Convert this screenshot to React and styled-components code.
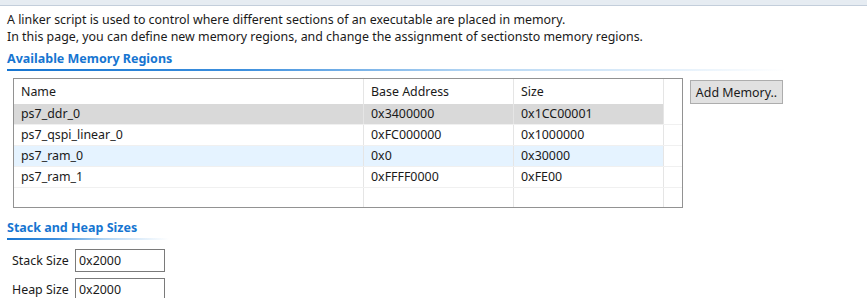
import React from 'react';
import styled, { createGlobalStyle } from 'styled-components';

const GlobalStyle = createGlobalStyle`
	body {
		margin: 0;
		background: #ffffff;
		font-family: "Noto Sans", "Open Sans", sans-serif;
		font-size: 12.4px;
		color: #1a1a1a;
	}
`;

const regions = [
	{ name: 'ps7_ddr_0', base: '0x3400000', size: '0x1CC00001', state: 'selected' },
	{ name: 'ps7_qspi_linear_0', base: '0xFC000000', size: '0x1000000' },
	{ name: 'ps7_ram_0', base: '0x0', size: '0x30000', state: 'hover' },
	{ name: 'ps7_ram_1', base: '0xFFFF0000', size: '0xFE00' },
	{ name: '', base: '', size: '' },
];

const COLS = '350px 150px 150px 18px';

export const App = () => (
	<Page>
		<GlobalStyle />
		<TopBand />
		<Content>
			<Intro>
				A linker script is used to control where different sections of an executable are placed in memory.
				<br />
				In this page, you can define new memory regions, and change the assignment of sectionsto memory regions.
			</Intro>

			<SectionTitle $lineWidth={780}>Available Memory Regions</SectionTitle>

			<TableRow>
				<Table>
					<HeaderRow>
						<Cell>Name</Cell>
						<Cell>Base Address</Cell>
						<Cell>Size</Cell>
						<Cell />
					</HeaderRow>
					{regions.map((r, i) => (
						<Row key={i} $state={r.state} $last={i === regions.length - 1}>
							<Cell>{r.name}</Cell>
							<Cell>{r.base}</Cell>
							<Cell>{r.size}</Cell>
							<Cell />
						</Row>
					))}
				</Table>
				<Button>Add Memory..</Button>
			</TableRow>

			<SectionTitle $lineWidth={162} $top={11}>Stack and Heap Sizes</SectionTitle>

			<Form>
				<Field>
					<Label>Stack Size</Label>
					<Input defaultValue="0x2000" />
				</Field>
				<Field>
					<Label>Heap Size</Label>
					<Input defaultValue="0x2000" />
				</Field>
			</Form>
		</Content>
	</Page>
);

export default App;

// styles
const Page = styled.div`
	width: 867px;
	height: 298px;
	overflow: hidden;
	background: #ffffff;
`;

const TopBand = styled.div`
	height: 5px;
	background: #e6ecf2;
	border-bottom: 1px solid #c3cedb;
`;

const Content = styled.div`
	padding: 5px 0 0 7px;
`;

const Intro = styled.div`
	line-height: 17px;
	color: #1a1a1a;
`;

const SectionTitle = styled.div`
	position: relative;
	margin-top: ${({ $top }) => ($top ? `${$top}px` : '5px')};
	height: 19px;
	line-height: 18px;
	font-weight: 700;
	color: #1675d1;
	font-size: 12.5px;

	&::after {
		content: '';
		position: absolute;
		left: 0;
		bottom: -2px;
		width: ${({ $lineWidth }) => $lineWidth}px;
		height: 2px;
		background: linear-gradient(to right, #1675d1 0%, #3d8fdd 30%, #b5d6f3 60%, #ffffff 100%);
	}
`;

const TableRow = styled.div`
	display: flex;
	align-items: flex-start;
	gap: 7px;
	margin-top: 9px;
	padding-left: 6px;
`;

const Table = styled.div`
	width: 668px;
	border: 1px solid #929292;
	background: #ffffff;
`;

const HeaderRow = styled.div`
	display: grid;
	grid-template-columns: ${COLS};
	height: 25px;

	& > div {
		line-height: 25px;
	}
`;

const Row = styled.div`
	display: grid;
	grid-template-columns: ${COLS};
	height: ${({ $last }) => ($last ? '19px' : '20px')};
	border-bottom: ${({ $last }) => ($last ? 'none' : '1px solid #f0f0f0')};
	background: ${({ $state }) =>
		$state === 'selected' ? '#d9d9d9' : $state === 'hover' ? '#e5f3ff' : 'transparent'};

	& > div {
		line-height: 20px;
	}

	& > div:last-child {
		background: #ffffff;
	}
`;

const Cell = styled.div`
	padding-left: 7px;
	border-right: 1px solid #e5e5e5;
	white-space: nowrap;
	overflow: hidden;

	&:last-child {
		border-right: none;
	}
`;

const Button = styled.button`
	width: 93px;
	height: 24px;
	margin-top: 2px;
	padding: 0;
	background: #e1e1e1;
	border: 1px solid #adadad;
	font-family: inherit;
	font-size: 12.4px;
	color: #1a1a1a;
`;

const Form = styled.div`
	display: flex;
	flex-direction: column;
	gap: 6px;
	margin-top: 11px;
	padding-left: 5px;
`;

const Field = styled.div`
	display: flex;
	align-items: center;
	gap: 3px;
`;

const Label = styled.span`
	width: 60px;
	white-space: nowrap;
`;

const Input = styled.input`
	width: 82px;
	height: 19px;
	padding: 1px 3px;
	border: 1px solid #7a7a7a;
	font-family: inherit;
	font-size: 12.4px;
	color: #1a1a1a;
	outline: none;
`;
